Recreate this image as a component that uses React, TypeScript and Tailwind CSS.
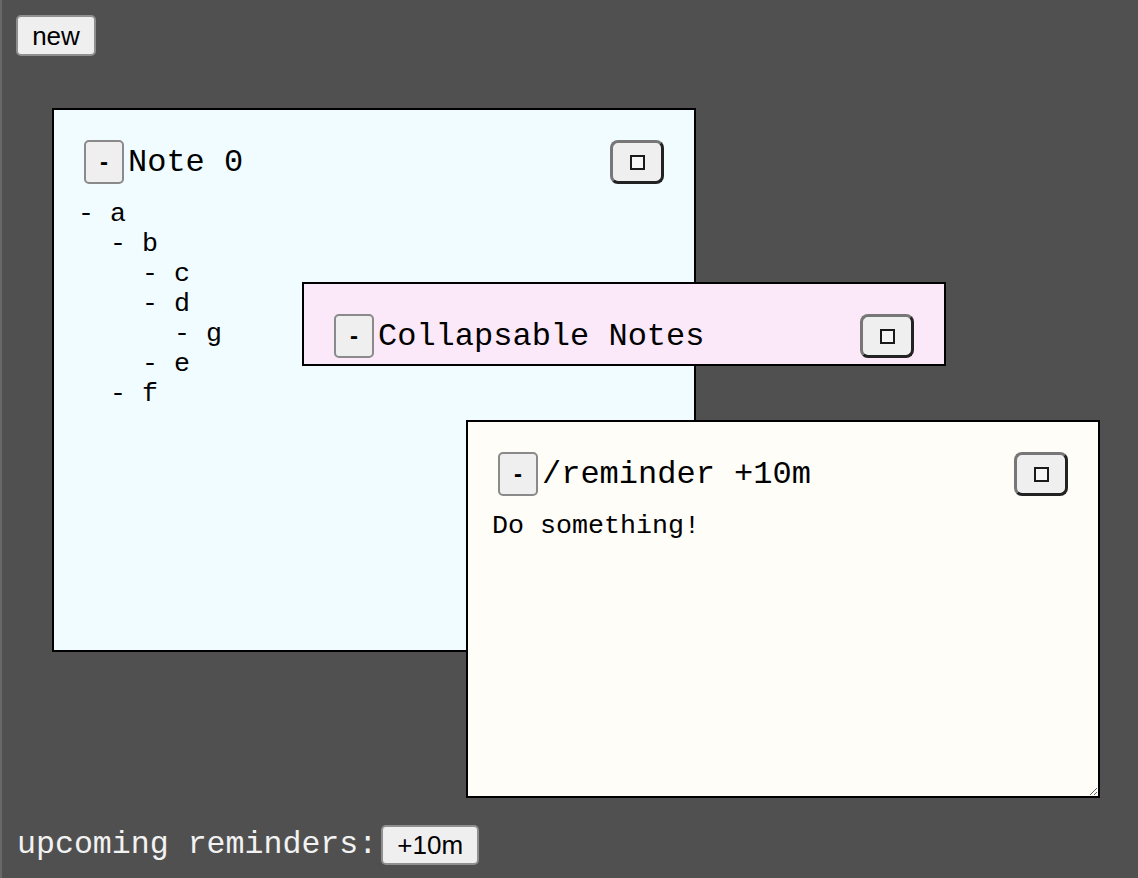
import React from "react";

type NoteProps = {
  title: string;
  body?: string;
  left: number;
  top: number;
  width: number;
  height: number;
  bg: string;
  z: number;
  collapsed?: boolean;
};

const mono = { fontFamily: '"Liberation Mono", "Courier New", monospace' };
const sans = { fontFamily: '"Liberation Sans", Arial, sans-serif' };

const Note = ({ title, body, left, top, width, height, bg, z, collapsed }: NoteProps) => {
  return (
    <div
      className={`absolute border-2 border-black ${bg} ${collapsed ? "overflow-hidden" : "resize overflow-hidden"}`}
      style={{ left, top, width, height, zIndex: z }}
    >
      {/* header: collapse toggle, title, maximize */}
      <div className="flex items-center mt-[30px] mx-[30px] h-[44px]">
        <button
          className="w-[40px] h-[44px] border-2 border-[#8a8a8a] rounded-[5px] bg-[#efefef] text-black text-[24px] font-bold leading-none flex items-center justify-center"
          style={sans}
        >
          -
        </button>
        <span className="ml-[4px] mt-[2px] text-[32px] text-black leading-none whitespace-pre" style={mono}>
          {title}
        </span>
        <div className="flex-1" />
        <button className="w-[54px] h-[44px] rounded-[8px] border-[3px] border-t-[#777777] border-l-[#777777] border-b-[#222222] border-r-[#222222] bg-[#efefef] flex items-center justify-center">
          <span className="block w-[15px] h-[15px] border-2 border-[#1a1a1a] bg-[#f6f6f6]" />
        </button>
      </div>
      {!collapsed && body && (
        <div className="mt-[15px] mx-[24px] text-[26.67px] leading-[30px] text-black whitespace-pre" style={mono}>
          {body}
        </div>
      )}
    </div>
  );
};

const App = () => {
  return (
    <div className="relative flex flex-col w-full h-[878px] bg-[#505050] border-l-2 border-[#686868] overflow-hidden">
      <div className="pt-[15px] pl-[14px]">
        <button
          className="w-[80px] h-[41px] border-2 border-[#8f8f8f] rounded-[5px] bg-[#efefef] text-black text-[26px] leading-none"
          style={sans}
        >
          new
        </button>
      </div>

      <Note
        title="Note 0"
        body={"- a\n  - b\n    - c\n    - d\n      - g\n    - e\n  - f"}
        left={50}
        top={108}
        width={644}
        height={544}
        bg="bg-[#f0fcff]"
        z={1}
      />
      <Note
        title="Collapsable Notes"
        left={300}
        top={282}
        width={644}
        height={84}
        bg="bg-[#fbe9f9]"
        z={2}
        collapsed
      />
      <Note
        title="/reminder +10m"
        body="Do something!"
        left={464}
        top={420}
        width={634}
        height={378}
        bg="bg-[#fefdf8]"
        z={3}
      />

      {/* upcoming reminders */}
      <div className="mt-auto flex items-center pl-[15px] pb-[13px]">
        <span className="text-[31.6px] text-[#f2f2f2] leading-none whitespace-pre" style={mono}>
          upcoming reminders:
        </span>
        <button
          className="ml-[4px] w-[98px] h-[40px] border-2 border-[#8f8f8f] rounded-[5px] bg-[#efefef] text-black text-[26px] leading-none"
          style={sans}
        >
          +10m
        </button>
      </div>
    </div>
  );
};

export default App;
